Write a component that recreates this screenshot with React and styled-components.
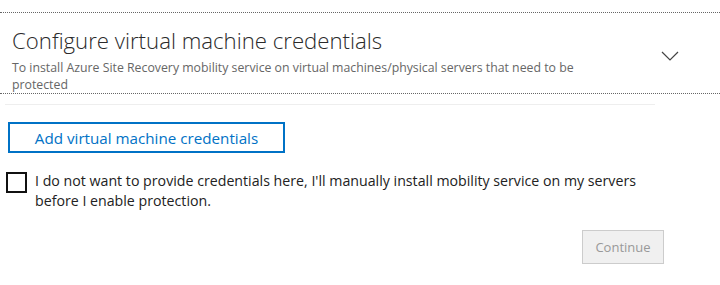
import React from "react";
import styled, { createGlobalStyle } from "styled-components";

const Global = createGlobalStyle`
  html, body { margin: 0; padding: 0; background: #fff; }
  body { font-family: "Open Sans", "Noto Sans", sans-serif; color: #222; }
`;

const Page = styled.div`
  width: 720px;
  height: 285px;
  padding-top: 12px;
  box-sizing: border-box;
  overflow: hidden;
`;

const Header = styled.div`
  display: flex;
  align-items: flex-start;
  justify-content: space-between;
  border-top: 1px dotted #666;
  border-bottom: 1px dotted #666;
  height: 82px;
  box-sizing: border-box;
  padding: 13px 0 0 12px;
`;

const HeaderText = styled.div`
  width: 585px;
`;

const Title = styled.h1`
  margin: 0;
  font-family: "Open Sans", sans-serif;
  font-weight: 300;
  font-size: 22.2px;
  line-height: 30px;
  color: #2a2a2a;
`;

const Subtitle = styled.p`
  margin: 3px 0 0;
  font-size: 12.3px;
  line-height: 17px;
  color: #666;
`;

const Chevron = styled.svg`
  margin: 25px 41px 0 0;
  flex: none;
`;

const Separator = styled.hr`
  margin: 10px 0 0 5px;
  width: 650px;
  border: 0;
  border-top: 1px solid #eee;
`;

const Body = styled.div`
  padding: 17px 0 0 8px;
`;

const OutlineButton = styled.button`
  width: 277px;
  height: 31px;
  border: 2px solid #0072c6;
  background: #fff;
  color: #0072c6;
  font-family: "Open Sans", sans-serif;
  font-size: 15.2px;
  padding: 0;
  cursor: pointer;
`;

const CheckRow = styled.label`
  display: flex;
  align-items: flex-start;
  gap: 8px;
  margin: 18px 0 0 -2px;
  font-size: 14.2px;
  line-height: 20px;
  color: #222;
`;

const Box = styled.span`
  flex: none;
  width: 17px;
  height: 17px;
  border: 2px solid #111;
  margin-top: 1px;
`;

const Footer = styled.div`
  display: flex;
  justify-content: flex-end;
  padding: 19px 56px 0 0;
`;

const DisabledButton = styled.button`
  width: 82px;
  height: 34px;
  border: 1px solid #ccc;
  background: #f0f0f0;
  color: #999;
  font-family: "Open Sans", sans-serif;
  font-size: 13px;
  padding: 0;
`;

export default function App() {
  return (
    <Page>
      <Global />
      <Header>
        <HeaderText>
          <Title>Configure virtual machine credentials</Title>
          <Subtitle>
            To install Azure Site Recovery mobility service on virtual machines/physical servers that need to be
            protected
          </Subtitle>
        </HeaderText>
        <Chevron width="18" height="10" viewBox="0 0 18 10">
          <path d="M1 1 L9 9 L17 1" fill="none" stroke="#444" strokeWidth="1.2" />
        </Chevron>
      </Header>
      <Separator />
      <Body>
        <OutlineButton>Add virtual machine credentials</OutlineButton>
        <CheckRow>
          <Box />
          <span>
            I do not want to provide credentials here, I'll manually install mobility service on my servers
            <br />
            before I enable protection.
          </span>
        </CheckRow>
      </Body>
      <Footer>
        <DisabledButton disabled>Continue</DisabledButton>
      </Footer>
    </Page>
  );
}
